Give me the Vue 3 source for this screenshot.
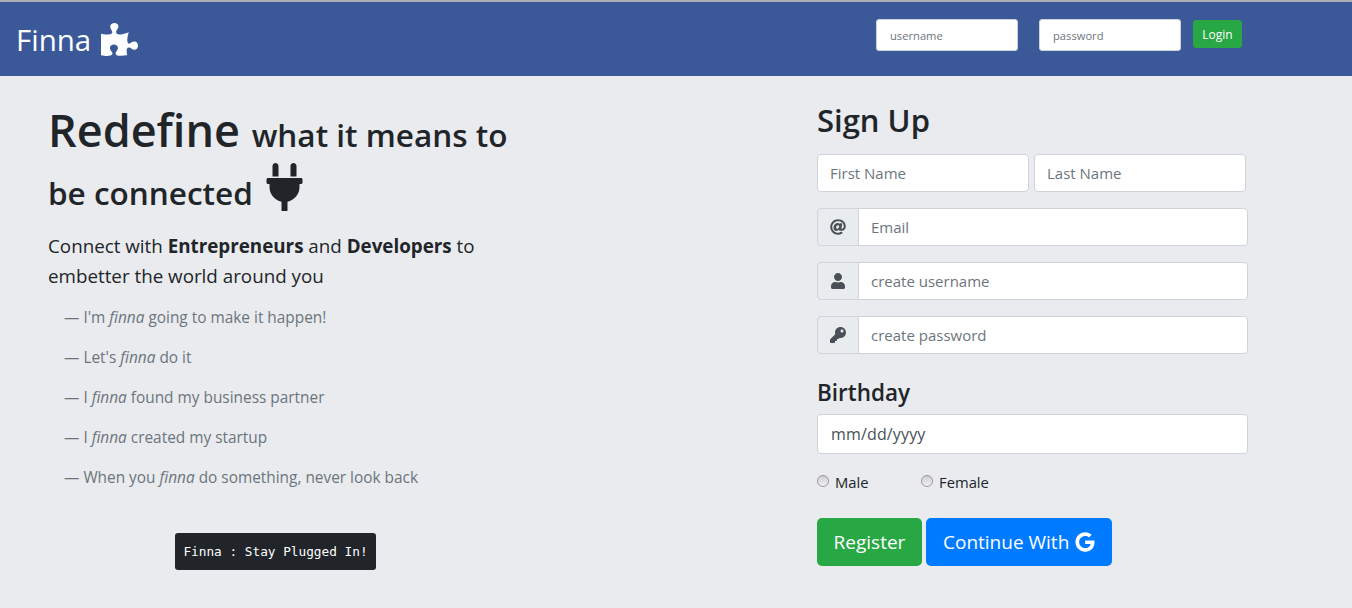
<template>
  <div class="page">
    <header class="topbar">
      <div class="brand">
        <span>Finna</span>
        <svg class="puzzle" viewBox="0 0 576 512"><path fill="currentColor" d="M519.442 288.651c-41.519 0-59.5 31.593-82.058 31.593C377.409 320.244 432 144 432 144s-196.288 80-196.288-3.297c0-35.827 36.288-46.25 36.288-85.985C272 19.216 243.885 0 210.539 0c-34.654 0-66.366 18.891-66.366 56.346 0 41.364 31.711 59.277 31.711 81.75C175.885 207.719 0 166.758 0 166.758v333.237s178.635 41.047 178.635-28.662c0-22.473-40-40.107-40-81.471 0-37.456 29.25-56.346 63.577-56.346 33.673 0 61.788 19.216 61.788 54.717 0 39.735-36.288 50.158-36.288 85.985 0 60.803 129.675 25.73 181.23 25.73 0 0-34.725-120.101 25.827-120.101 35.962 0 46.423 36.152 86.308 36.152C556.712 416 576 387.99 576 354.443c0-34.199-18.962-65.792-56.558-65.792z"/></svg>
      </div>
      <form class="login" @submit.prevent>
        <input class="login-input" type="text" placeholder="username" />
        <input class="login-input" type="text" placeholder="password" />
        <button class="btn-login">Login</button>
      </form>
    </header>

    <main class="content">
      <section class="intro">
        <h1 class="headline">
          <span class="big">Redefine </span>what it means to be connected
          <svg class="plug" viewBox="0 0 384 512"><path fill="currentColor" d="M256 144V32c0-17.673 14.327-32 32-32s32 14.327 32 32v112h-64zm112 16H16c-8.837 0-16 7.163-16 16v32c0 8.837 7.163 16 16 16h16v32c0 77.406 54.969 141.971 128 156.796V512h64v-99.204c73.031-14.825 128-79.39 128-156.796v-32h16c8.837 0 16-7.163 16-16v-32c0-8.837-7.163-16-16-16zM128 144V32c0-17.673-14.327-32-32-32S64 14.327 64 32v112h64z"/></svg>
        </h1>
        <p class="lead">
          Connect with <b>Entrepreneurs</b> and <b>Developers</b> to embetter the world around you
        </p>
        <ul class="quotes">
          <li>— I'm <i>finna</i> going to make it happen!</li>
          <li>— Let's <i>finna</i> do it</li>
          <li>— I <i>finna</i> found my business partner</li>
          <li>— I <i>finna</i> created my startup</li>
          <li>— When you <i>finna</i> do something, never look back</li>
        </ul>
        <div class="tagline-row">
          <span class="tagline">Finna : Stay Plugged In!</span>
        </div>
      </section>

      <form class="signup" @submit.prevent>
        <h2 class="signup-title">Sign Up</h2>
        <div class="name-row">
          <input class="field" type="text" placeholder="First Name" />
          <input class="field" type="text" placeholder="Last Name" />
        </div>
        <div class="group">
          <span class="addon">
            <svg class="ico" viewBox="0 0 512 512"><path fill="currentColor" d="M256 8C118.941 8 8 118.919 8 256c0 137.059 110.919 248 248 248 48.154 0 95.342-14.14 135.408-40.223 12.005-7.815 14.625-24.288 5.552-35.372l-10.177-12.433c-7.671-9.371-21.179-11.667-31.373-5.129C325.92 429.757 291.314 440 256 440c-101.458 0-184-82.542-184-184S154.542 72 256 72c100.139 0 184 57.619 184 160 0 38.786-21.093 79.742-58.17 83.693-17.349-.454-16.91-12.857-13.476-30.024l23.433-121.11C394.653 149.75 383.308 136 368.225 136h-44.981a13.518 13.518 0 0 0-13.432 11.993l-.01.092c-14.697-17.901-40.448-21.775-59.971-21.775-74.58 0-137.831 62.234-137.831 151.46 0 65.303 36.785 105.87 96 105.87 26.984 0 57.369-15.637 74.991-38.333 9.522 34.104 40.613 34.103 70.71 34.103C462.609 379.41 504 307.798 504 232 504 95.653 394.023 8 256 8zm-21.68 304.43c-22.249 0-36.07-15.623-36.07-40.771 0-44.993 30.779-72.729 58.63-72.729 22.292 0 35.601 15.241 35.601 40.77 0 45.061-33.875 72.73-58.161 72.73z"/></svg>
          </span>
          <input class="field in-group" type="text" placeholder="Email" />
        </div>
        <div class="group">
          <span class="addon">
            <svg class="ico" viewBox="0 0 448 512"><path fill="currentColor" d="M224 256c70.7 0 128-57.3 128-128S294.7 0 224 0 96 57.3 96 128s57.3 128 128 128zm89.6 32h-16.7c-22.2 10.2-46.9 16-72.9 16s-50.6-5.8-72.9-16h-16.7C60.2 288 0 348.2 0 422.4V464c0 26.5 21.5 48 48 48h352c26.5 0 48-21.5 48-48v-41.6c0-74.2-60.2-134.4-134.4-134.4z"/></svg>
          </span>
          <input class="field in-group" type="text" placeholder="create username" />
        </div>
        <div class="group">
          <span class="addon">
            <svg class="ico" viewBox="0 0 512 512"><path fill="currentColor" d="M512 176.001C512 273.203 433.202 352 336 352c-11.22 0-22.19-1.062-32.827-3.069l-24.012 27.014A23.999 23.999 0 0 1 261.223 384H224v40c0 13.255-10.745 24-24 24h-40v40c0 13.255-10.745 24-24 24H24c-13.255 0-24-10.745-24-24v-78.059c0-6.365 2.529-12.47 7.029-16.971l161.802-161.802C163.108 213.814 160 195.271 160 176 160 78.798 238.797.001 335.999 0 433.488-.001 512 78.511 512 176.001zM336 128c0 26.51 21.49 48 48 48s48-21.49 48-48-21.49-48-48-48-48 21.49-48 48z"/></svg>
          </span>
          <input class="field in-group" type="text" placeholder="create password" />
        </div>
        <h4 class="birthday-title">Birthday</h4>
        <input class="field date" type="text" value="mm/dd/yyyy" />
        <div class="gender">
          <label class="radio male"><input type="radio" name="gender" />Male</label>
          <label class="radio"><input type="radio" name="gender" />Female</label>
        </div>
        <div class="actions">
          <button class="btn green">Register</button>
          <button class="btn blue">
            Continue With
            <svg class="google" viewBox="0 0 488 512"><path fill="currentColor" d="M488 261.8C488 403.3 391.1 504 248 504 110.8 504 0 393.2 0 256S110.8 8 248 8c66.8 0 123 24.5 166.3 64.9l-67.5 64.9C258.5 52.6 94.3 116.6 94.3 256c0 86.5 69.1 156.6 153.7 156.6 98.2 0 135-70.4 140.8-106.9H248v-85.3h236.1c2.3 12.7 3.9 24.9 3.9 41.4z"/></svg>
          </button>
        </div>
      </form>
    </main>
  </div>
</template>

<script setup>
</script>

<style>
html,
body {
  margin: 0;
  background: #e9ebee;
}
</style>

<style scoped>
* {
  box-sizing: border-box;
}

.page {
  min-height: 608px;
  background: #e9ebee;
  color: #212529;
  font-family: "Open Sans", "Noto Sans", sans-serif;
  font-size: 16px;
}

.topbar {
  height: 76px;
  background: #3b5998;
  border-top: 2px solid #a9adb5;
  display: flex;
  justify-content: space-between;
}

.brand {
  margin-left: 16px;
  height: 74px;
  display: flex;
  align-items: center;
  gap: 10px;
  color: #fff;
  font-size: 29.5px;
}

.puzzle {
  width: 37px;
  height: 33px;
  margin-top: 1px;
}

.login {
  display: flex;
  align-items: flex-start;
  margin-right: 110px;
  padding-top: 17px;
}

.login-input {
  width: 142px;
  height: 32px;
  margin-right: 21px;
  padding: 0 13px;
  border: 1px solid #ced4da;
  border-radius: 3px;
  background: #fff;
  font: 11.2px "Open Sans", sans-serif;
}

.login-input:nth-of-type(2) {
  margin-right: 12px;
}

.login-input::placeholder,
.field::placeholder {
  color: #6c757d;
  opacity: 1;
}

.btn-login {
  width: 49px;
  height: 28px;
  margin-top: 1px;
  padding: 0;
  border: 1px solid #28a745;
  border-radius: 3px;
  background: #28a745;
  color: #fff;
  font: 12px "Open Sans", sans-serif;
}

.content {
  display: grid;
  grid-template-columns: 769px 431px;
  padding-left: 48px;
}

.intro {
  padding-top: 30px;
}

.headline {
  width: 480px;
  margin: 0;
  font-size: 31.5px;
  font-weight: 600;
  line-height: 57px;
}

.big {
  font-size: 45px;
  line-height: 1;
}

.plug {
  width: 37px;
  height: 48px;
  margin-left: 5px;
  vertical-align: -6px;
}

.lead {
  width: 450px;
  margin: 10px 0 0;
  font-size: 18.8px;
  line-height: 30px;
}

.quotes {
  list-style: none;
  margin: 7px 0 0;
  padding: 0 0 0 16px;
  color: #6c757d;
  font-size: 15.4px;
}

.quotes li {
  height: 40px;
  line-height: 40px;
}

.tagline-row {
  width: 455px;
  margin-top: 35px;
  display: flex;
  justify-content: center;
}

.tagline {
  height: 37px;
  padding: 0 8px;
  border-radius: 3px;
  background: #212529;
  color: #fff;
  font-family: "DejaVu Sans Mono", monospace;
  font-size: 12.75px;
  line-height: 37px;
}

.signup {
  padding-top: 23px;
}

.signup-title {
  margin: 0 0 12px;
  font-size: 31px;
  font-weight: 600;
  line-height: 43px;
}

.field {
  height: 38px;
  padding: 0 12px;
  border: 1px solid #ced4da;
  border-radius: 4px;
  background: #fff;
  color: #495057;
  font: 15px "Open Sans", sans-serif;
}

.name-row {
  display: flex;
  gap: 5px;
  width: 429px;
  margin-bottom: 16px;
}

.name-row .field {
  width: 212px;
}

.group {
  display: flex;
  width: 431px;
  height: 38px;
  margin-bottom: 16px;
}

.addon {
  width: 42px;
  display: flex;
  align-items: center;
  justify-content: center;
  border: 1px solid #ced4da;
  border-radius: 4px 0 0 4px;
  background: #e9ecef;
  color: #495057;
}

.ico {
  width: 16px;
  height: 16px;
}

.in-group {
  flex: 1;
  margin-left: -1px;
  border-radius: 0 4px 4px 0;
}

.birthday-title {
  margin: 23px 0 5px;
  font-size: 22.5px;
  font-weight: 600;
  line-height: 32px;
}

.date {
  display: block;
  width: 431px;
  height: 40px;
  padding: 0 13px;
  font-size: 16px;
  letter-spacing: 0.15px;
}

.gender {
  display: flex;
  margin-top: 18px;
  font-size: 14.8px;
  line-height: 20px;
}

.radio {
  display: flex;
  align-items: center;
  gap: 6px;
}

.male {
  width: 104px;
}

.radio input {
  appearance: none;
  width: 12px;
  height: 12px;
  margin: 0 0 2px;
  border: 1px solid #9a9a9a;
  border-radius: 50%;
  background: linear-gradient(#cfcfcf, #f0f0f0);
}

.actions {
  display: flex;
  gap: 4px;
  margin-top: 26px;
}

.btn {
  height: 48px;
  padding: 0 17px;
  border: 0;
  border-radius: 5px;
  color: #fff;
  font: 19px "Open Sans", sans-serif;
  display: flex;
  align-items: center;
  gap: 6px;
}

.green {
  width: 105px;
  justify-content: center;
  padding: 0;
  background: #28a745;
}

.blue {
  background: #007bff;
}

.google {
  width: 20px;
  height: 20px;
}
</style>
